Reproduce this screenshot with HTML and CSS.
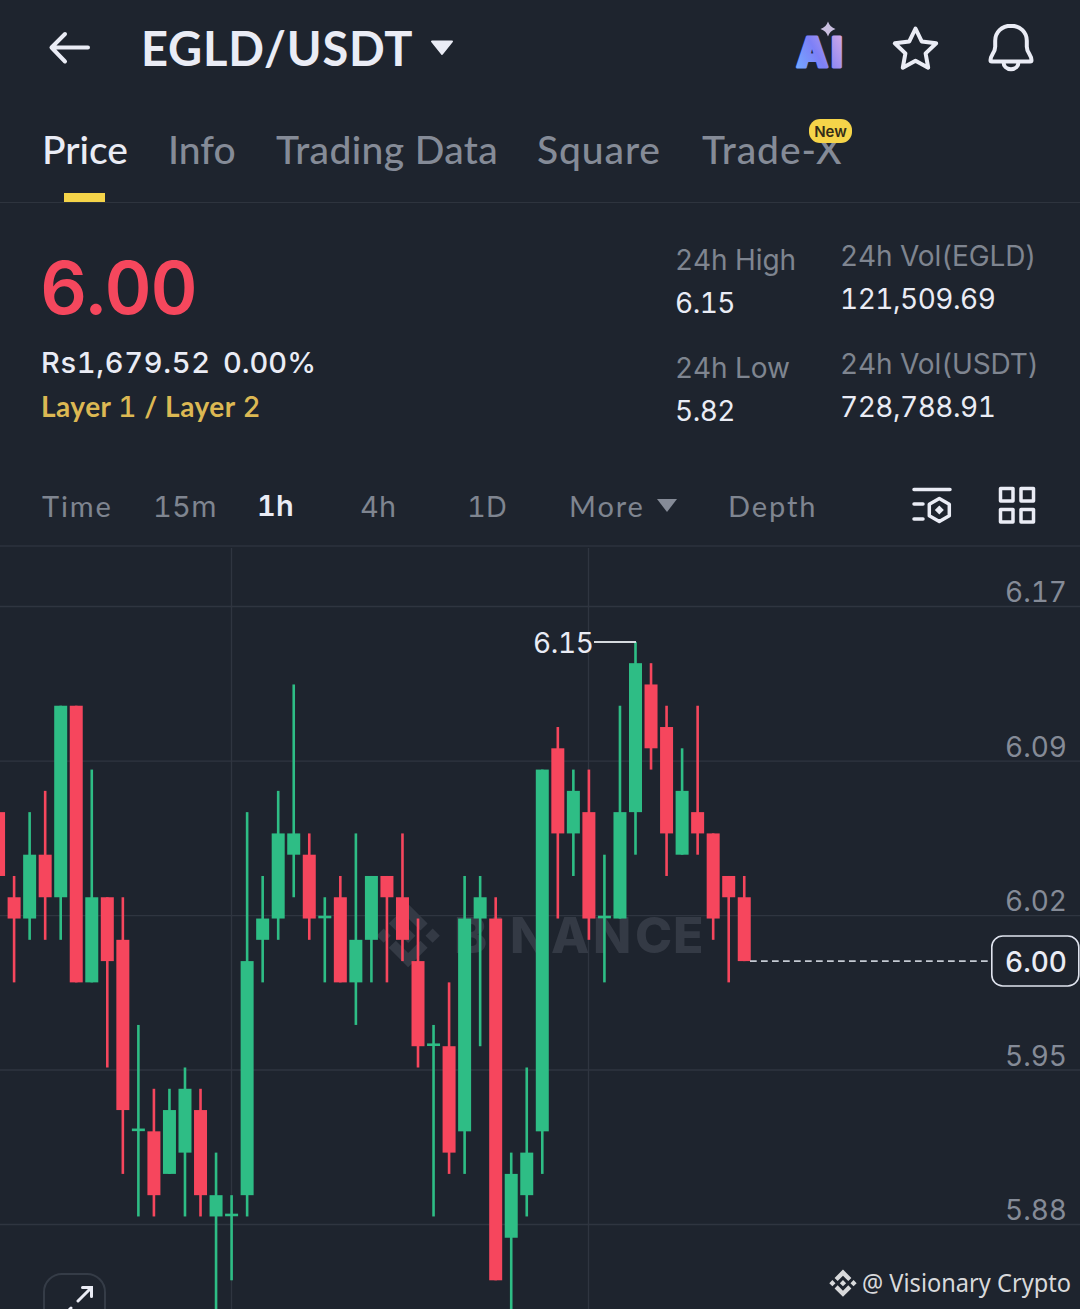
FILE: index.html
```html
<!DOCTYPE html>
<html lang="en">
<head>
<meta charset="utf-8">
<title>EGLD/USDT</title>
<link rel="stylesheet" href="styles.css">
</head>
<body>
<main class="screen">
  <header class="topbar">
    <svg class="icon back" viewBox="46 28 48 40" width="48" height="40"><path d="M88 47.5H51.5M65 34 51.5 47.5 65 61.5"/></svg>
    <h1 class="pair">EGLD/USDT</h1>
    <svg class="pair-caret" viewBox="0 0 24 16" width="24" height="16"><path d="M2 1.5h20L12 14z"/></svg>
    <div class="actions">
      <svg class="ai" viewBox="792 18 56 60" width="56" height="60">
        <defs><linearGradient id="ai" gradientUnits="userSpaceOnUse" x1="796" y1="66" x2="843" y2="40"><stop offset="0" stop-color="#74a7ff"/><stop offset=".45" stop-color="#7d80f7"/><stop offset="1" stop-color="#cba6e8"/></linearGradient></defs>
        <text x="796.5 831" y="67">AI</text>
        <path d="M828 21.500q1.800 5.700 7.500 7.500-5.700 1.800-7.500 7.500-1.800-5.700-7.500-7.500 5.700-1.800 7.500-7.500z" fill="#c9bfe0"/>
      </svg>
      <svg class="icon star" viewBox="890 22 50 52" width="50" height="52"><path d="M915.5 28.500l6.200 12.900 14.500 1.900-10.600 10.100 2.600 14.300-12.700-7-12.700 7 2.600-14.300-10.600-10.100 14.500-1.900z"/></svg>
      <svg class="icon bell" viewBox="986 20 50 54" width="50" height="54"><path d="M1011 25.7c-9.500 0-15.800 7-15.800 15v6c0 6-4.700 8-4.700 13.500q0 1.300 1.300 1.300h38.400q1.300 0 1.300-1.300c0-5.500-4.700-7.500-4.700-13.500v-6c0-8-6.300-15-15.800-15zM1003.500 62c0 4 3 7.200 7.500 7.200s7.500-3.200 7.500-7.200"/></svg>
    </div>
  </header>

  <nav class="tabs">
    <span class="tab active">Price</span>
    <span class="tab">Info</span>
    <span class="tab data">Trading Data</span>
    <span class="tab wide">Square</span>
    <span class="tab wide">Trade-X<b class="badge">New</b></span>
  </nav>

  <section class="summary">
    <div class="quote">
      <div class="last">6.00</div>
      <div class="fiat"><span class="fiat-price">Rs1,679.52</span><span class="change">0.00%</span></div>
      <div class="tags">Layer <span class="num">1</span> / Layer <span class="num">2</span></div>
    </div>
    <dl class="stats">
      <dt>24h High</dt><dd>6.15</dd>
      <dt>24h Low</dt><dd>5.82</dd>
    </dl>
    <dl class="stats volume">
      <dt>24h Vol(EGLD)</dt><dd>121,509.69</dd>
      <dt>24h Vol(USDT)</dt><dd>728,788.91</dd>
    </dl>
  </section>

  <nav class="frames">
    <span class="word">Time</span>
    <span>15m</span>
    <span class="active">1h</span>
    <span>4h</span>
    <span>1D</span>
    <span class="word">More<svg class="caret" viewBox="0 0 20 13" width="20" height="13"><path d="M0 0h20L10 13z"/></svg></span>
    <span class="word">Depth</span>
    <svg class="icon tool" viewBox="911 486 42 40" width="42" height="40"><path d="M914 490.500h36M914 505h9M914 520h9M939.300 499.500l10 5.700v11.600l-10 5.700-10-5.700v-11.600z"/><path class="solid" d="M939.300 506.500l4.500 4.500-4.500 4.500-4.500-4.500z"/></svg>
    <svg class="icon tool" viewBox="997 485 40 40" width="40" height="40"><path d="M1000.500 488.500h12.500v12.500h-12.500zM1021 488.500h12.500v12.500H1021zM1000.500 509.500h12.500V522h-12.500zM1021 509.500h12.500V522H1021z"/></svg>
  </nav>

  <svg class="chart" viewBox="0 548 1080 761" width="1080" height="761">
    <defs>
      <path id="logo" d="M38.730 53.200 63.310 28.620 87.900 53.210 102.200 38.910 63.310 0 24.430 38.900zM0 63.310 14.300 49 28.600 63.310 14.300 77.610zM38.730 73.410 63.310 98 87.900 73.400 102.200 87.690 63.310 126.610 24.430 87.710zM98 63.310 112.300 49 126.600 63.310 112.300 77.610zM77.830 63.300 63.310 48.790 48.780 63.300 63.310 77.820z"/>
    </defs>
    <path class="grid" d="M0 606.500H1080M0 761.200H1080M0 915.700H1080M0 1070H1080M0 1224.500H1080M231.500 548V1309M588.500 548V1309"/>
    <g class="watermark">
      <use href="#logo" transform="translate(376.500 904) scale(.5)"/>
      <text x="454 490 510 551 593 635 673" y="953">BINANCE</text>
    </g>
    <g id="candles"></g>
    <path class="peak" d="M594 642H636"/>
    <text class="label bright" x="533" y="653" textLength="61">6.15</text>
    <path class="dashes" d="M750 961.200H988"/>
    <g class="axis">
      <text class="label" x="1005" y="601.500" textLength="62">6.17</text>
      <text class="label" x="1005" y="756.500" textLength="62">6.09</text>
      <text class="label" x="1005" y="910.500" textLength="62">6.02</text>
      <text class="label" x="1005" y="1065.500" textLength="62">5.95</text>
      <text class="label" x="1005" y="1219.500" textLength="62">5.88</text>
    </g>
    <rect class="pricebox" x="991.800" y="936" width="87" height="50" rx="11"/>
    <text class="label bright current" x="1005" y="972" textLength="62">6.00</text>
    <rect class="expand" x="44" y="1274" width="61" height="60" rx="18"/>
    <path class="expand-arrow" d="M78 1301 91 1288M82.500 1287.500H91.500V1296.500M69 1310l2-2"/>
    <g class="credit">
      <use href="#logo" transform="translate(829.300 1269.500) scale(.216)"/>
      <text x="862" y="1291.500" textLength="209" lengthAdjust="spacingAndGlyphs">@ Visionary Crypto</text>
    </g>
  </svg>
</main>
<script src="chart.js"></script>
</body>
</html>
```
FILE: styles.css
```css
* { box-sizing: border-box; }
body { margin: 0; background: #1e242e; color: #eaecf5; font-family: Inter, "Liberation Sans", sans-serif; font-variant-numeric: tabular-nums; }
.screen { width: 1080px; height: 1309px; overflow: hidden; }
.icon { fill: none; stroke: #eaecf5; stroke-width: 4; stroke-linecap: round; stroke-linejoin: round; }

.topbar { display: flex; align-items: center; height: 96px; padding: 0 44px 0 46px; }
.pair { margin: 0 0 0 47px; width: 289px; font: bold 47px/97px Lato, sans-serif; white-space: nowrap; letter-spacing: .8px; }
.pair-caret { fill: #eaecf5; stroke: #eaecf5; stroke-width: 2; stroke-linejoin: round; }
.actions { display: flex; align-items: center; margin-left: auto; gap: 46px; }
.ai { margin-right: -4px; }
.ai text { font: 800 41px Inter, sans-serif; fill: url(#ai); stroke: url(#ai); stroke-width: 3; stroke-linejoin: round; }
.bell { margin-top: -3px; }
.star { margin-top: -1px; }

.tabs { display: grid; grid-template-columns: 126px 108px 261px 165px auto; justify-content: start; height: 107px; padding-left: 42px; border-bottom: 1px solid #2e343e; font: 500 39px/106px Lato, sans-serif; color: #858b97; }
.tab { position: relative; justify-self: start; height: 106px; white-space: nowrap; }
.tab.data { letter-spacing: .35px; }
.tab.wide { letter-spacing: .9px; }
.tab.active { color: #eaecf5; }
.tab.active::after { content: ""; position: absolute; left: 22px; bottom: 0; width: 41px; height: 9px; background: #f5d449; }
.badge { position: absolute; left: 107px; top: 23px; width: 43px; height: 24px; border-radius: 11px; background: #f5d449; color: #332d18; font: 600 15px/25px Inter, sans-serif; letter-spacing: 0; text-align: center; }

.summary { display: flex; height: 267px; }
.quote { flex: 0 0 676px; padding: 45px 0 0 42px; }
.last { margin-left: -2px; font-size: 73px; font-weight: 600; line-height: 80px; letter-spacing: -1.200px; color: #f5475d; }
.fiat { display: flex; margin: 13px 0 0 -1px; font-size: 29px; font-weight: 500; line-height: 44px; }
.fiat-price { width: 182px; letter-spacing: .700px; }
.tags { margin: -1px 0 0 -1px; font: bold 28px/44px Lato, sans-serif; letter-spacing: .500px; color: #dcb853; }
.num { font-family: Inter, sans-serif; font-weight: 500; font-variant-numeric: tabular-nums; }
.stats { flex: 0 0 165px; margin: 0; padding-top: 36px; font-size: 28px; line-height: 42.500px; white-space: nowrap; }
.stats.volume { padding-top: 32px; }
.stats dt { margin-left: -1px; color: #7f8590; letter-spacing: -.100px; }
.stats dd { margin: 0 0 23px -1px; letter-spacing: -.500px; }

.frames { display: grid; grid-template-columns: 111px 105px 102px 107px 102px 159px 183px 86px auto; justify-content: start; align-items: center; height: 77px; padding: 0 0 3px 42px; border-bottom: 2px solid #282e39; font-size: 29px; color: #7f8590; line-height: 73px; letter-spacing: .300px; }
.frames .word { margin-top: -2px; font-family: Lato, sans-serif; letter-spacing: 1.900px; }
.frames .active { margin: -2px 0 0 -1px; color: #eaecf5; font-weight: 600; }
.caret { margin-left: 12px; vertical-align: 5px; fill: #858b97; }
.tool { margin-top: -3px; stroke-width: 3.500; }
.tool .solid { fill: #eaecf5; stroke: none; }

.chart { display: block; margin-top: 1px; }
.grid { fill: none; stroke: #2f3540; stroke-width: 1.300; }
.watermark { fill: #343a45; }
.watermark text { font: 800 50px Inter, sans-serif; }
.up { fill: #2ebd85; }
.down { fill: #f6465d; }
.label { font-size: 28px; fill: #858b97; }
.label.bright { fill: #eaecf5; }
.label.current { font-weight: 500; }
.peak { stroke: #d5dade; stroke-width: 1.800; }
.dashes { stroke: #c5cad3; stroke-width: 1.800; stroke-dasharray: 6.700 4.300; }
.pricebox { fill: #1e242e; stroke: #dfe3ee; stroke-width: 1.600; }
.expand { fill: #1e242e; stroke: #353c47; stroke-width: 2; }
.expand-arrow { fill: none; stroke: #eaecf5; stroke-width: 3; stroke-linecap: round; }
.credit { fill: #d8d9db; }
.credit text { font: 24.500px "Noto Sans", sans-serif; }
```
FILE: chart.js
```js
// Each candle: [direction, body top, body bottom, high, low], in cents relative to 6.00.
const candles = [
  "d 7 4 7 4", "d 3 2 4 -1", "u 5 2 7 1", "d 5 3 8 1", "u 12 3 12 1", "d 12 -1 12 -1",
  "u 3 -1 9 -1", "d 3 0 3 -5", "d 1 -7 3 -10", "u -8 -8 -3 -12", "d -8 -11 -6 -12",
  "u -7 -10 -6 -10", "u -6 -9 -5 -12", "d -7 -11 -6 -12", "u -11 -12 -9 -17",
  "u -12 -12 -11 -15", "u 0 -11 7 -12", "u 2 1 4 -1", "u 6 2 8 1", "u 6 5 13 3",
  "d 5 2 6 1", "u 2 2 3 -1", "d 3 -1 4 -1", "u 1 -1 6 -3", "u 4 1 4 -1", "d 4 3 4 -1",
  "d 3 1 6 0", "d 0 -4 2 -5", "u -4 -4 -3 -12", "d -4 -9 -1 -10", "u 2 -8 4 -10",
  "u 3 2 4 -4", "d 2 -15 3 -15", "u -10 -13 -9 -17", "u -9 -11 -5 -12", "u 9 -8 9 -10",
  "d 10 6 11 2", "u 8 6 9 4", "d 7 2 9 1", "u 2 2 5 -1", "u 7 2 12 2", "u 14 7 15 5",
  "d 13 10 14 9", "d 11 6 12 4", "u 8 5 10 5", "d 7 6 12 5", "d 6 2 6 1", "d 4 3 4 -1",
  "d 3 0 4 0"
];
const group = document.getElementById("candles");
const y = cents => 961.1 - cents * 21.28;

function bar(cls, x, top, width, height) {
  const rect = document.createElementNS("http://www.w3.org/2000/svg", "rect");
  const attrs = { class: cls, x, y: top, width, height };
  for (const name in attrs) rect.setAttribute(name, attrs[name]);
  group.appendChild(rect);
}

candles.forEach((line, i) => {
  const [dir, ...values] = line.split(" ");
  const [top, bottom, high, low] = values.map(Number);
  const x = 14.1 + (i - 1) * 15.535;
  const cls = dir === "u" ? "up" : "down";
  bar(cls, x - 1.3, y(high), 2.6, y(low) - y(high));
  if (top === bottom) bar(cls, x - 6.5, y(top) - 2.8, 13, 2.6);
  else bar(cls, x - 6.5, y(top), 13, y(bottom) - y(top));
});
```
